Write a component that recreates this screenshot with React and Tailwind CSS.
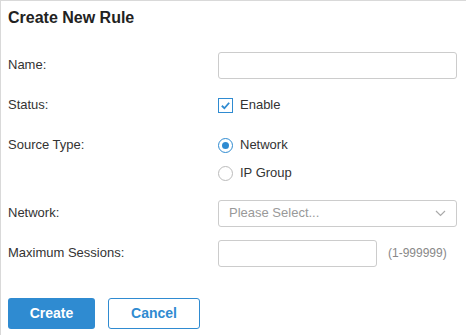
import React, { useState } from 'react';

const labelCls = 'w-[210px] shrink-0 text-[13px] text-[#333]';

const App = () => {
  const [enabled, setEnabled] = useState(true);
  const [source, setSource] = useState('network');

  const Radio = ({ value, label }) => (
    <label className="flex items-center h-[26px] cursor-pointer" onClick={() => setSource(value)}>
      <span
        className={
          'w-[15px] h-[15px] rounded-full border flex items-center justify-center ' +
          (source === value ? 'border-[#2f8bd1]' : 'border-[#bbb]')
        }
      >
        {source === value && <span className="w-[7px] h-[7px] rounded-full bg-[#2f8bd1]" />}
      </span>
      <span className="ml-[7px] text-[13px] text-[#333]">{label}</span>
    </label>
  );

  return (
    <div
      className="w-[466px] h-[335px] bg-white border-t border-l border-[#d9d9d9] overflow-hidden"
      style={{ fontFamily: '"Liberation Sans", Arial, sans-serif' }}
    >
      <h1 className="px-[7px] pt-[5px] h-[51px] text-[16px] font-bold text-[#222]">Create New Rule</h1>

      <div className="px-[7px] flex flex-col">
        {/* Name */}
        <div className="flex items-center h-[26px]">
          <span className={labelCls}>Name:</span>
          <input className="w-[239px] h-[27px] border border-[#ccc] rounded-[3px] outline-none px-2 text-[13px]" />
        </div>

        {/* Status */}
        <div className="flex items-center h-[26px] mt-[14px]">
          <span className={labelCls}>Status:</span>
          <label className="flex items-center cursor-pointer" onClick={() => setEnabled(!enabled)}>
            <span className="w-[15px] h-[15px] border border-[#2f8bd1] flex items-center justify-center">
              {enabled && (
                <svg width="11" height="11" viewBox="0 0 12 12">
                  <path d="M2 6.3 L4.8 9 L10 3" fill="none" stroke="#2f8bd1" strokeWidth="2" />
                </svg>
              )}
            </span>
            <span className="ml-[7px] text-[13px] text-[#333]">Enable</span>
          </label>
        </div>

        {/* Source Type */}
        <div className="flex mt-[14px]">
          <span className={labelCls + ' h-[26px] flex items-center'}>Source Type:</span>
          <div className="flex flex-col gap-[2px]">
            <Radio value="network" label="Network" />
            <Radio value="ipgroup" label="IP Group" />
          </div>
        </div>

        {/* Network */}
        <div className="flex items-center h-[26px] mt-[14px]">
          <span className={labelCls}>Network:</span>
          <div className="w-[239px] h-[27px] border border-[#ccc] rounded-[3px] flex items-center justify-between pl-[10px] pr-[10px]">
            <span className="text-[13px] text-[#999]">Please Select...</span>
            <svg width="11" height="7" viewBox="0 0 11 7">
              <path d="M1 1 L5.5 5.5 L10 1" fill="none" stroke="#aaa" strokeWidth="1.2" />
            </svg>
          </div>
        </div>

        {/* Maximum Sessions */}
        <div className="flex items-center h-[26px] mt-[14px]">
          <span className={labelCls}>Maximum Sessions:</span>
          <input className="w-[159px] h-[27px] border border-[#ccc] rounded-[3px] outline-none px-2 text-[13px]" />
          <span className="ml-[11px] text-[12px] text-[#888]">(1-999999)</span>
        </div>

        {/* Buttons */}
        <div className="flex mt-[32px] gap-[13px]">
          <button className="w-[87px] h-[31px] bg-[#2f8bd1] text-white text-[14px] font-bold rounded-[3px]">
            Create
          </button>
          <button className="w-[92px] h-[31px] border border-[#2f8bd1] text-[#2f8bd1] text-[14px] font-bold rounded-[3px] bg-white">
            Cancel
          </button>
        </div>
      </div>
    </div>
  );
};

export default App;
